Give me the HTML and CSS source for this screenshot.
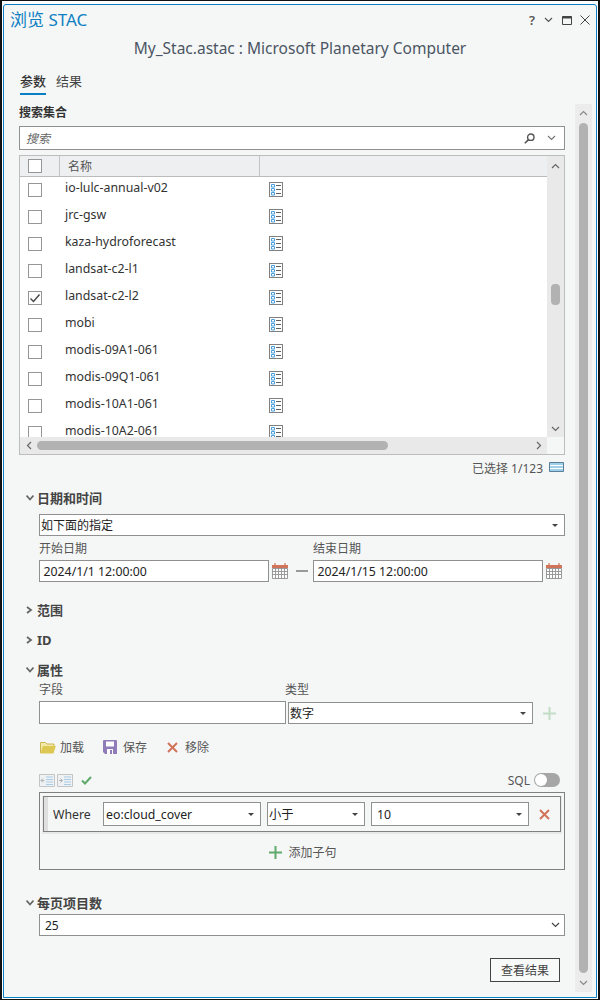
FILE: index.html
```html
<!DOCTYPE html>
<html lang="zh">
<head>
<meta charset="utf-8">
<title>浏览 STAC</title>
<link rel="stylesheet" href="styles.css">
</head>
<body>
<svg class="defs" xmlns="http://www.w3.org/2000/svg">
  <symbol id="i-list" viewBox="0 0 14 15">
    <rect x=".5" y=".5" width="13" height="14" fill="#fff" stroke="#808080"/>
    <path d="M2.5 2.5h3v2.5h-3zM2.5 6.5h3V9h-3zM2.5 10.5h3V13h-3z" fill="#fff" stroke="#4a9fdc"/>
    <path d="M7 3.5h5M7 7.5h5M7 11.5h5" stroke="#606060"/>
  </symbol>
  <symbol id="i-cal" viewBox="0 0 16 16">
    <path d="M0 2h16v3H0z" fill="#d0755a"/>
    <path d="M3 0v3M13 0v3" stroke="#d0755a" stroke-width="1.2"/>
    <path d="M.5 5.5h15v10H.5zM.5 8.5h15M.5 11.5h15M3.5 5.5v10M6.5 5.5v10M9.5 5.5v10M12.5 5.5v10" fill="#fff" stroke="#999"/>
  </symbol>
  <symbol id="i-plus" viewBox="0 0 13 13">
    <path d="M6.5 0v13M0 6.5h13" stroke="currentColor" stroke-width="2"/>
  </symbol>
  <symbol id="i-x" viewBox="0 0 11 11">
    <path d="M1 1l9 9M10 1l-9 9" stroke="#d0735a" stroke-width="2"/>
  </symbol>
  <symbol id="i-chev-d" viewBox="0 0 9 6">
    <path d="M1 1l3.5 3.5L8 1" fill="none" stroke="currentColor" stroke-width="1.2"/>
  </symbol>
  <symbol id="i-chev-u" viewBox="0 0 9 6">
    <path d="M1 5l3.5-3.5L8 5" fill="none" stroke="currentColor" stroke-width="1.2"/>
  </symbol>
  <symbol id="i-chev-l" viewBox="0 0 6 9">
    <path d="M5 1L1.5 4.5 5 8" fill="none" stroke="currentColor" stroke-width="1.2"/>
  </symbol>
  <symbol id="i-chev-r" viewBox="0 0 6 9">
    <path d="M1 1l3.5 3.5L1 8" fill="none" stroke="currentColor" stroke-width="1.2"/>
  </symbol>
  <symbol id="i-open" viewBox="0 0 8 8">
    <path d="M1 1l4 3-4 3" fill="none" stroke="#666" stroke-width="1.8"/>
  </symbol>
  <symbol id="i-close" viewBox="0 0 8 8">
    <path d="M.5 1.5l3.5 4 3.5-4" fill="none" stroke="#666" stroke-width="1.8"/>
  </symbol>
</svg>

<div class="frame">
<div class="window">
  <header class="titlebar">
    <h1 class="title">浏览 STAC</h1>
    <div class="winbtns">
      <span class="help">?</span>
      <svg class="ic-chev-win"><use href="#i-chev-d"/></svg>
      <svg class="ic-max" viewBox="0 0 10 9"><path d="M.5.5h9v8h-9z" fill="#f5f7f7" stroke="#444"/><path d="M0 1.5h10" stroke="#444" stroke-width="2"/></svg>
      <svg class="ic-close" viewBox="0 0 10 10"><path d="M.5.5l9 9M9.5.5l-9 9" stroke="#444" stroke-width="1"/></svg>
    </div>
  </header>
  <div class="subtitle">My_Stac.astac : Microsoft Planetary Computer</div>
  <nav class="tabs">
    <span class="tab active">参数</span>
    <span class="tab">结果</span>
  </nav>

  <div class="body">
    <main class="content">
      <div class="label-strong">搜索集合</div>
      <div class="search">
        <span class="search-text">搜索</span>
        <svg class="ic-search" viewBox="0 0 11 11"><circle cx="6.8" cy="4.2" r="3.2" fill="none" stroke="#555" stroke-width="1.4"/><path d="M4.6 6.6L.8 10.3" stroke="#555" stroke-width="1.6"/></svg>
        <svg class="ic-search-chev"><use href="#i-chev-d"/></svg>
      </div>

      <div class="grid">
        <div class="grid-top">
          <div class="grid-main">
            <div class="grid-head">
              <div class="hc hc-check"><span class="cb"></span></div>
              <div class="hc hc-name">名称</div>
              <div class="hc hc-rest"></div>
            </div>
            <div class="rows">
              <div class="row"><span class="cb"></span><span class="name">io-lulc-annual-v02</span><svg class="ic-list"><use href="#i-list"/></svg></div>
              <div class="row"><span class="cb"></span><span class="name">jrc-gsw</span><svg class="ic-list"><use href="#i-list"/></svg></div>
              <div class="row"><span class="cb"></span><span class="name">kaza-hydroforecast</span><svg class="ic-list"><use href="#i-list"/></svg></div>
              <div class="row"><span class="cb"></span><span class="name">landsat-c2-l1</span><svg class="ic-list"><use href="#i-list"/></svg></div>
              <div class="row"><span class="cb"><svg class="ic-tick" viewBox="0 0 12 12"><path d="M1.5 6.5l3 3 6-7" fill="none" stroke="#444" stroke-width="1.4"/></svg></span><span class="name">landsat-c2-l2</span><svg class="ic-list"><use href="#i-list"/></svg></div>
              <div class="row"><span class="cb"></span><span class="name">mobi</span><svg class="ic-list"><use href="#i-list"/></svg></div>
              <div class="row"><span class="cb"></span><span class="name">modis-09A1-061</span><svg class="ic-list"><use href="#i-list"/></svg></div>
              <div class="row"><span class="cb"></span><span class="name">modis-09Q1-061</span><svg class="ic-list"><use href="#i-list"/></svg></div>
              <div class="row"><span class="cb"></span><span class="name">modis-10A1-061</span><svg class="ic-list"><use href="#i-list"/></svg></div>
              <div class="row"><span class="cb"></span><span class="name">modis-10A2-061</span><svg class="ic-list"><use href="#i-list"/></svg></div>
            </div>
          </div>
          <div class="vscroll">
            <svg class="ic-arrow"><use href="#i-chev-u"/></svg>
            <div class="vthumb"></div>
            <svg class="ic-arrow"><use href="#i-chev-d"/></svg>
          </div>
        </div>
        <div class="grid-bottom">
          <div class="hscroll">
            <svg class="ic-arrow-h"><use href="#i-chev-l"/></svg>
            <div class="hthumb"></div>
            <svg class="ic-arrow-h"><use href="#i-chev-r"/></svg>
          </div>
          <div class="corner"></div>
        </div>
      </div>

      <div class="status">
        <span>已选择 1/123</span>
        <svg class="ic-table" viewBox="0 0 15 10"><path d="M.5.5h14v9H.5z" fill="#9fd0e8" stroke="#5a7f99"/><path d="M1 3.5h13M1 6.5h13" stroke="#fff"/></svg>
      </div>

      <section class="sec sec-date">
        <div class="heading"><svg class="tw"><use href="#i-close"/></svg>日期和时间</div>
        <div class="sub">
          <div class="select sel-date"><span>如下面的指定</span><i class="caret"></i></div>
          <div class="dates">
            <div class="date-col date-start">
              <div class="field-label">开始日期</div>
              <div class="date-line">
                <div class="input date-input">2024/1/1 12:00:00</div>
                <svg class="ic-cal"><use href="#i-cal"/></svg>
                <span class="dash"></span>
              </div>
            </div>
            <div class="date-col">
              <div class="field-label">结束日期</div>
              <div class="date-line">
                <div class="input date-input">2024/1/15 12:00:00</div>
                <svg class="ic-cal"><use href="#i-cal"/></svg>
              </div>
            </div>
          </div>
        </div>
      </section>

      <div class="heading h-range"><svg class="tw"><use href="#i-open"/></svg>范围</div>
      <div class="heading h-id"><svg class="tw"><use href="#i-open"/></svg>ID</div>

      <section class="sec sec-attr">
        <div class="heading"><svg class="tw"><use href="#i-close"/></svg>属性</div>
        <div class="sub">
          <div class="attr-labels">
            <div class="field-label fl-field">字段</div>
            <div class="field-label">类型</div>
          </div>
          <div class="attr-line">
            <div class="input attr-input"></div>
            <div class="select attr-type"><span>数字</span><i class="caret"></i></div>
            <svg class="ic-plus-off"><use href="#i-plus"/></svg>
          </div>
          <div class="toolbar">
            <span class="tool tool-load">
              <svg class="ic-folder" viewBox="0 0 16 13"><path d="M.5 12V1.5h5l1.5 1.5h7V5" fill="#f3e9a8" stroke="#c9b650"/><path d="M.5 12.5L2.8 5h13l-2.3 7.5z" fill="#dcc852"/></svg>加载
            </span>
            <span class="tool tool-save">
              <svg class="ic-save" viewBox="0 0 14 14"><path d="M0 1a1 1 0 011-1h12a1 1 0 011 1v13H2l-2-2z" fill="#8f7cb8"/><path d="M3 1.5h8v5H3z" fill="#fff"/><path d="M4 9h6v5H4z" fill="#fff"/><path d="M7 10h2v4H7z" fill="#8f7cb8"/></svg>保存
            </span>
            <span class="tool tool-remove">
              <svg class="ic-x-tool"><use href="#i-x"/></svg>移除
            </span>
          </div>
          <div class="query-bar">
            <svg class="ic-indent" viewBox="0 0 16 13"><path d="M.5.5h15v12H.5z" fill="#eef2f5" stroke="#c4c4c4"/><path d="M7 3h7M7 5.5h7M7 8h7M7 10.5h7" stroke="#a9cbe4"/><path d="M5.5 6.5H2M4 4.5l-2 2 2 2" fill="none" stroke="#b0b0b0"/></svg>
            <svg class="ic-indent" viewBox="0 0 16 13"><path d="M.5.5h15v12H.5z" fill="#eef2f5" stroke="#c4c4c4"/><path d="M7 3h7M7 5.5h7M7 8h7M7 10.5h7" stroke="#a9cbe4"/><path d="M2 6.5h3.5M3.5 4.5l2 2-2 2" fill="none" stroke="#b0b0b0"/></svg>
            <svg class="ic-check" viewBox="0 0 11 9"><path d="M1 4.5l3 3 6-6.5" fill="none" stroke="#5fa96b" stroke-width="2"/></svg>
            <span class="sql">SQL</span>
            <span class="toggle"><span class="knob"></span></span>
          </div>
          <div class="query">
            <div class="clause">
              <span class="grip"></span>
              <span class="where">Where</span>
              <div class="select sel-a"><span>eo:cloud_cover</span><i class="caret"></i></div>
              <div class="select sel-b"><span>小于</span><i class="caret"></i></div>
              <div class="select sel-c"><span>10</span><i class="caret"></i></div>
              <svg class="ic-x-clause"><use href="#i-x"/></svg>
            </div>
            <div class="add">
              <svg class="ic-plus-on"><use href="#i-plus"/></svg>添加子句
            </div>
          </div>
        </div>
      </section>

      <section class="sec sec-page">
        <div class="heading"><svg class="tw"><use href="#i-close"/></svg>每页项目数</div>
        <div class="sub">
          <div class="select sel-page"><span>25</span><svg class="ic-sel-chev"><use href="#i-chev-d"/></svg></div>
        </div>
      </section>

      <div class="actions"><button class="btn" type="button">查看结果</button></div>
    </main>

    <aside class="scroll-outer">
      <svg class="ic-arrow-o"><use href="#i-chev-u"/></svg>
      <div class="othumb"></div>
      <svg class="ic-arrow-o"><use href="#i-chev-d"/></svg>
    </aside>
  </div>
</div>
</div>
</body>
</html>
```
FILE: styles.css
```css
* { box-sizing: border-box; }
html, body { margin: 0; padding: 0; }
body {
  width: 600px;
  height: 1000px;
  overflow: hidden;
  background: #fff;
  font-family: "Noto Sans", "Noto Sans CJK SC", sans-serif;
  font-size: 12px;
  color: #333;
}
.defs { display: none; }
.frame {
  width: 600px;
  height: 1000px;
  border: 1px solid #111;
  border-left-width: 2px;
  border-right-width: 2px;
  padding: 3px 1px 1px 1px;
}
.window {
  height: 994px;
  background: #f5f7f7;
  border: 1px solid #0b7fc4;
  border-radius: 3px 3px 0 0;
  display: flex;
  flex-direction: column;
}
.titlebar {
  height: 30px;
  flex: none;
  display: flex;
  align-items: center;
  justify-content: space-between;
  padding: 0 6px;
}
.title { margin: 0 0 3px; font-size: 17px; font-weight: 400; color: #0f7fc2; }
.winbtns { display: flex; align-items: center; }
.help { font-size: 13px; font-weight: 600; color: #555; margin-right: 9px; line-height: 14px; }
.ic-chev-win { width: 9px; height: 6px; color: #555; margin-right: 9px; }
.ic-max { width: 10px; height: 9px; margin-right: 8px; }
.ic-close { width: 10px; height: 10px; }
.subtitle {
  height: 26px;
  flex: none;
  text-align: center;
  font-size: 15.5px;
  line-height: 26px;
  color: #4b5563;
}
.tabs { flex: none; display: flex; gap: 10px; margin-top: 12px; padding-left: 16px; height: 22px; }
.tab { font-size: 13px; line-height: 16px; height: 22px; color: #444; }
.tab.active { border-bottom: 2px solid #0b7fc4; color: #333; font-weight: 500; }
.body { flex: none; margin-top: 9px; height: 888px; display: flex; padding: 0 4px 0 15px; gap: 10px; }
.content { width: 546px; flex: none; }

.label-strong { height: 18px; line-height: 18px; font-weight: 700; font-size: 12px; color: #333; }
.search {
  margin-top: 4px; height: 24px; background: #fff; border: 1px solid #909090;
  display: flex; align-items: center; padding: 0 5px 0 6px;
}
.search-text { font-style: italic; color: #666; flex: 1; font-size: 12px; }
.ic-search { width: 11px; height: 11px; margin-right: 12px; }
.ic-search-chev { width: 9px; height: 6px; color: #777; margin-right: 3px; }

.grid { margin-top: 5px; height: 300px; border: 1px solid #bdbdbd; background: #fff; display: flex; flex-direction: column; }
.grid-top { height: 281px; display: flex; }
.grid-main { width: 527px; display: flex; flex-direction: column; }
.grid-head { height: 21px; flex: none; background: #eeeff1; border-bottom: 1px solid #bbb; display: flex; }
.hc { height: 20px; }
.hc-check { width: 40px; border-right: 1px solid #c4c4c4; padding: 3px 0 0 8px; }
.hc-name { width: 200px; border-right: 1px solid #c4c4c4; padding-left: 8px; line-height: 21px; color: #555; }
.hc-rest { flex: 1; }
.cb { display: block; width: 14px; height: 14px; border: 1px solid #969696; background: #fff; flex: none; }
.rows { flex: 1; overflow: hidden; margin-top: -1px; }
.row { height: 27px; display: flex; align-items: center; padding-left: 8px; }
.row .cb { margin-top: 1px; }
.name { width: 227px; padding-left: 23px; color: #333; font-size: 12.35px; line-height: 14px; position: relative; top: -2px; flex: none; }
.ic-list { width: 14px; height: 15px; flex: none; }
.ic-tick { display: block; width: 12px; height: 12px; }
.vscroll { width: 17px; flex: none; background: #e9e9e9; display: flex; flex-direction: column; align-items: center; padding: 7px 0 5px; }
.ic-arrow { width: 9px; height: 6px; color: #666; flex: none; }
.vthumb { width: 9px; height: 21px; background: #b2b2b2; border-radius: 4px; margin: 115px 0 auto; }
.grid-bottom { height: 17px; display: flex; }
.hscroll { width: 527px; background: #e9e9e9; display: flex; align-items: center; padding: 0 5px 0 6px; }
.ic-arrow-h { width: 6px; height: 9px; color: #666; flex: none; }
.hthumb { width: 351px; height: 9px; background: #b2b2b2; border-radius: 5px; margin: 0 auto 0 5px; }
.corner { flex: 1; background: #f5f7f7; }

.status { height: 26px; display: flex; align-items: center; justify-content: flex-end; padding-right: 1px; color: #555; gap: 6px; }
.ic-table { width: 15px; height: 10px; margin-top: -3px; }

.sec-date { margin-top: 8px; }
.heading { height: 18px; line-height: 18px; font-weight: 700; font-size: 13px; color: #444; display: flex; align-items: center; padding: 0 0 0 7px; }
.tw { width: 8px; height: 8px; flex: none; margin-right: 3px; }
.sub { margin-left: 20px; }
.select { background: #fff; border: 1px solid #909090; height: 22px; display: flex; align-items: center; justify-content: space-between; padding: 0 6px 0 1px; color: #222; }
.caret { width: 0; height: 0; border-left: 3px solid transparent; border-right: 3px solid transparent; border-top: 3px solid #444; flex: none; }
.sel-date { margin-top: 7px; }
.dates { display: flex; margin-top: 3px; }
.date-col { width: 252px; }
.date-start { width: 274px; }
.field-label { height: 18px; line-height: 20px; color: #555; }
.date-line { display: flex; align-items: center; margin-top: 3px; }
.input { background: #fff; border: 1px solid #909090; height: 22px; line-height: 20px; color: #222; }
.date-input { width: 230px; padding: 1px 0 0 3.5px; font-size: 12.3px; }
.ic-cal { width: 16px; height: 16px; margin-left: 3px; flex: none; }
.dash { width: 12px; height: 2px; background: #999; margin-left: 8px; flex: none; }

.h-range { margin-top: 19px; }
.h-id { margin-top: 12px; }
.sec-attr { margin-top: 12px; }
.attr-labels { display: flex; margin-top: 1px; }
.fl-field { width: 246px; }
.attr-line { display: flex; align-items: flex-end; margin-top: 3px; }
.attr-input { width: 247px; height: 23px; }
.attr-type { width: 245px; margin-left: 2px; }
.ic-plus-off { width: 13px; height: 13px; margin: 0 0 4px 10px; color: #c3dcc5; }
.toolbar { display: flex; align-items: center; height: 18px; margin-top: 14px; color: #555; }
.tool { display: flex; align-items: center; }
.tool-load { width: 64px; padding-left: 1px; }
.ic-folder { width: 16px; height: 13px; margin-right: 4px; }
.tool-save { width: 64px; }
.ic-save { width: 14px; height: 14px; margin-right: 6px; }
.ic-x-tool { width: 11px; height: 11px; margin-right: 7px; }
.query-bar { display: flex; align-items: center; height: 18px; margin-top: 15px; }
.ic-indent { width: 16px; height: 13px; margin-right: 2px; flex: none; }
.ic-check { width: 11px; height: 9px; margin-left: 6px; }
.sql { margin-left: auto; color: #555; }
.toggle { width: 26px; height: 14px; background: #a6a6a6; border-radius: 7px; margin: 0 5px 0 4px; padding: 1px; display: flex; }
.knob { width: 12px; height: 12px; background: #fff; border-radius: 50%; }
.query { margin-top: 3px; height: 78px; border: 1px solid #808080; padding: 3px; }
.clause { height: 36px; border: 1px solid #808080; display: flex; align-items: center; box-shadow: 0 1px 0 1px #e8e8e8; font-size: 12.3px; }
.grip { width: 4px; height: 34px; background: #dfdfdf; flex: none; }
.where { width: 55px; padding-left: 5px; flex: none; color: #333; }
.clause .select { height: 24px; }
.sel-a { width: 158px; padding-left: 2px; }
.sel-b { width: 98px; margin-left: 6px; }
.sel-c { width: 158px; margin-left: 6px; padding-left: 5px; }
.ic-x-clause { width: 11px; height: 11px; margin-left: 10px; }
.add { height: 36px; display: flex; align-items: center; justify-content: center; color: #555; padding: 4px 0 0 2px; }
.ic-plus-on { width: 13px; height: 13px; color: #5fa96b; margin-right: 6px; }
.sec-page { margin-top: 24px; }
.sel-page { margin-top: 2px; padding-left: 5px; padding-right: 4px; }
.ic-sel-chev { width: 9px; height: 6px; color: #444; }
.actions { display: flex; justify-content: flex-end; margin-top: 22px; padding-right: 5px; }
.btn { width: 70px; height: 24px; border: 1px solid #444; background: #f8f9f9; color: #444; font: inherit; padding: 0; border-radius: 0; }

.scroll-outer { width: 17px; flex: none; background: #ececec; display: flex; flex-direction: column; align-items: center; padding: 6px 0 6px; }
.ic-arrow-o { width: 9px; height: 6px; color: #888; flex: none; }
.othumb { width: 9px; height: 850px; background: #b2b2b2; border-radius: 5px; margin: 7px 0 auto; }
```
